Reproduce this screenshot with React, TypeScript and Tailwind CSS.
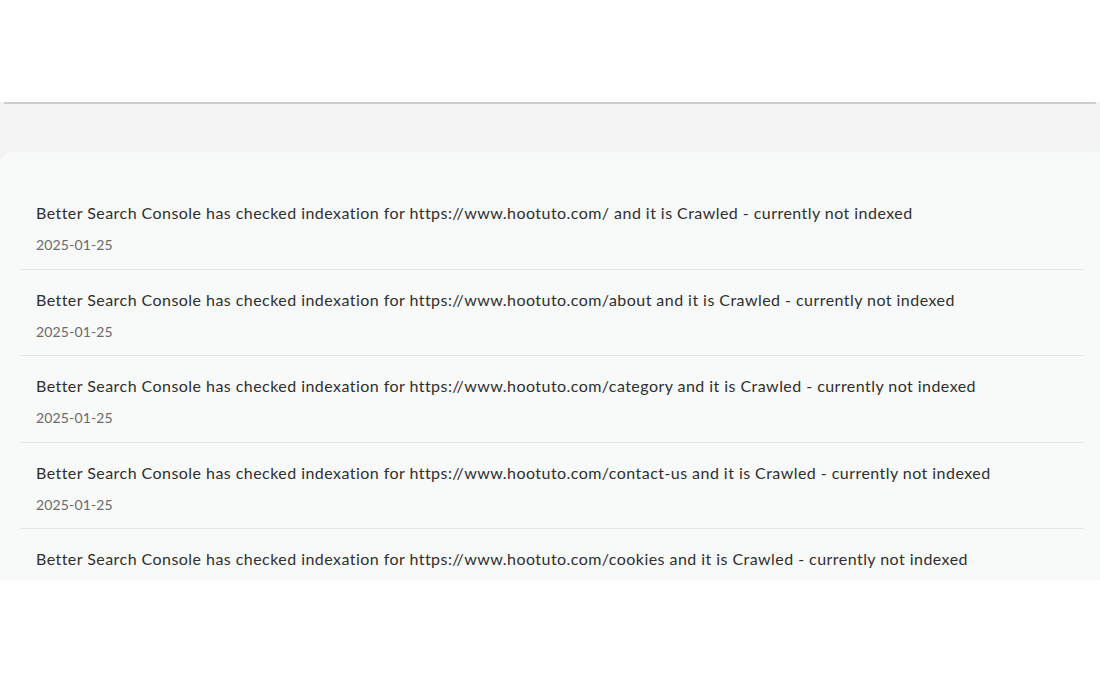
const items = ['', 'about', 'category', 'contact-us', 'cookies'];

export default function App() {
  return (
    <div className="w-[1100px] h-[700px] bg-white overflow-hidden" style={{ fontFamily: 'Lato, "Open Sans", sans-serif' }}>
      <div className="h-[104px] bg-[#f3f3f3]">
        <div className="h-[102px] bg-white" />
        <div className="mx-1 h-[2px] rounded-full bg-[#cdcdcd]" />
      </div>
      <div className="bg-[#f3f3f3] pt-[48px]">
        <div className="h-[428px] overflow-hidden rounded-tl-xl bg-[#f8f9f9] pl-5 pr-4 pt-[31px]">
          {items.map((p, i) => (
            <div key={i} className="border-b border-[#e4e6e6] px-4 pt-5 pb-[13.5px]">
              <div className="text-[16px] leading-5 text-[#2f2f2f] tracking-[0.45px]">
                Better Search Console has checked indexation for https://www.hootuto.com/{p} and it is Crawled - currently not indexed
              </div>
              <div className="mt-3 text-[14px] leading-5 text-[#6b6b6b] tracking-[0.15px]">2025-01-25</div>
            </div>
          ))}
        </div>
      </div>
    </div>
  );
}
